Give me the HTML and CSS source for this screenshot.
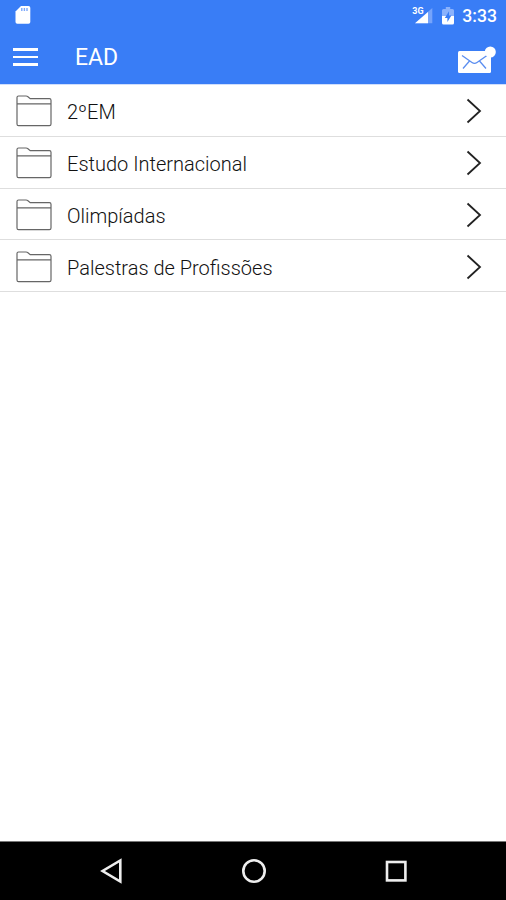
FILE: index.html
```
<!DOCTYPE html>
<html lang="pt-BR">
<head>
  <meta charset="UTF-8" />
  <meta name="viewport" content="width=device-width, initial-scale=1" />
  <title>EAD</title>
  <link rel="stylesheet" href="styles.css">
</head>
<body>
  <svg class="symbols" aria-hidden="true">
    <symbol id="folder" viewBox="0 0 36 32">
      <path d="M1 8.8H35M1 9V2.6Q1 1 2.6 1H10Q11.2 1 12 1.8L14.2 3.6H33.4Q35 3.6 35 5.2V29Q35 30.6 33.4 30.6H2.6Q1 30.6 1 29V9" />
    </symbol>
    <symbol id="chevron" viewBox="0 0 16 26">
      <path d="M1.5 1.5L14 13L1.5 24.5" />
    </symbol>
  </svg>

  <header>
    <div class="status-bar">
      <svg class="sd-card" width="16" height="20" viewBox="0 0 16 20">
        <path d="M6 1H13.5Q15.3 1 15.3 2.8V17Q15.3 18.8 13.5 18.8H2.3Q.5 18.8 .5 17V6.5Z" fill="#fff" />
        <path d="M6.8 3V6M9.4 3V6M12 3V6" stroke="#7ca8fb" stroke-width="1.4" />
      </svg>
      <div class="status-icons">
        <div class="network">
          <span>3G</span>
          <svg width="18" height="16" viewBox="0 0 18 16">
            <path d="M17.3 0V15.3H0Z" fill="#76a4fb" />
            <path d="M13 4V15.3H0Z" fill="#fff" />
          </svg>
        </div>
        <svg class="battery" width="12" height="18" viewBox="0 0 12 18">
          <path d="M3.8 0H8.2V2H10.5Q12 2 12 3.5V9H0V3.5Q0 2 1.5 2H3.8Z" fill="#8bb2fc" />
          <path d="M0 9H12V16Q12 17.5 10.5 17.5H1.5Q0 17.5 0 16Z" fill="#fff" />
          <path d="M7 4.3L2.8 11H5.4V15L9.4 8.5H7Z" fill="#397df6" />
        </svg>
        <span class="time">3:33</span>
      </div>
    </div>
    <div class="toolbar">
      <button class="menu" aria-label="Menu"><i></i><i></i><i></i></button>
      <h1>EAD</h1>
      <button class="mail" aria-label="Mensagens">
        <svg width="38" height="28" viewBox="0 0 38 28">
          <rect x="0" y="5" width="33" height="22" rx="1.5" fill="#fff" />
          <path d="M4 9.5L14 16.5Q16.5 18.4 19 16.5L29 9.5M5 22.5L11.5 15M28 22.5L21.5 15" fill="none" stroke="#5b8ef0" stroke-width="1.3" />
          <circle cx="32.3" cy="6" r="5.5" fill="#fff" />
        </svg>
      </button>
    </div>
  </header>

  <main>
    <ul class="folders">
      <li>
        <svg class="folder"><use href="#folder" /></svg>
        <span>2ºEM</span>
        <svg class="chevron"><use href="#chevron" /></svg>
      </li>
      <li>
        <svg class="folder"><use href="#folder" /></svg>
        <span>Estudo Internacional</span>
        <svg class="chevron"><use href="#chevron" /></svg>
      </li>
      <li>
        <svg class="folder"><use href="#folder" /></svg>
        <span>Olimpíadas</span>
        <svg class="chevron"><use href="#chevron" /></svg>
      </li>
      <li>
        <svg class="folder"><use href="#folder" /></svg>
        <span>Palestras de Profissões</span>
        <svg class="chevron"><use href="#chevron" /></svg>
      </li>
    </ul>
  </main>

  <nav class="nav-bar">
    <svg width="24" height="26" viewBox="0 0 24 26">
      <path d="M20.3 2.5V23.5L2.6 13Z" />
    </svg>
    <svg width="24" height="26" viewBox="0 0 24 26">
      <circle cx="12" cy="13" r="10.7" />
    </svg>
    <svg width="24" height="26" viewBox="0 0 24 26">
      <rect x="3" y="4" width="18.4" height="18.4" />
    </svg>
  </nav>
</body>
</html>
```

FILE: styles.css
```
* {
  margin: 0;
  padding: 0;
  box-sizing: border-box;
}

body {
  font-family: Roboto, sans-serif;
  background: #fff;
  height: 100vh;
  color: #111;
  display: flex;
  flex-direction: column;
  overflow: hidden;
}

svg {
  display: block;
  flex: none;
}

.symbols {
  position: absolute;
  width: 0;
  height: 0;
}

button {
  background: none;
  border: none;
  cursor: pointer;
}

/* Topo */
header {
  background: #397df6;
  color: #fff;
  height: 85px;
  border-bottom: 1px solid #cfdefc;
}

.status-bar {
  height: 32px;
  padding: 0 9px 0 15px;
  display: flex;
  align-items: center;
  justify-content: space-between;
}

.sd-card {
  margin-bottom: 2px;
}

.status-icons {
  display: flex;
  align-items: center;
}

.network {
  position: relative;
  margin-right: 9px;
}

.network span {
  position: absolute;
  left: -3px;
  top: -2px;
  font-size: 9px;
  line-height: 10px;
  font-weight: 700;
}

.battery {
  margin-right: 8px;
}

.time {
  font-size: 17.6px;
  font-weight: 500;
  line-height: 32px;
}

.toolbar {
  height: 52px;
  padding: 0 10px 0 13px;
  display: flex;
  align-items: center;
}

.menu {
  width: 25px;
  display: flex;
  flex-direction: column;
  gap: 5px;
  margin-bottom: 2px;
}

.menu i {
  height: 2.7px;
  background: #fff;
}

h1 {
  flex: 1;
  margin: 0 0 2px 37px;
  font-size: 23px;
  font-weight: 400;
}

.mail {
  margin-top: 4px;
}

/* Lista de pastas */
main {
  flex: 1;
}

.folders {
  list-style: none;
}

.folders li {
  height: 51.75px;
  padding: 0 24px 0 16px;
  display: flex;
  align-items: center;
  border-bottom: 1.5px solid #dedede;
}

.folders span {
  flex: 1;
  margin: 4px 0 0 15px;
  font-size: 20px;
  font-weight: 300;
}

.folder {
  width: 36px;
  height: 32px;
  margin-top: 2px;
  fill: none;
  stroke: #666;
  stroke-width: 1.2;
}

.chevron {
  width: 16px;
  height: 26px;
  margin-top: 2px;
  fill: none;
  stroke: #222;
  stroke-width: 1.8;
}

/* Barra de navegação */
.nav-bar {
  height: 59px;
  background: #000;
  border-top: 1px solid #777;
  padding: 0 98px 0 100px;
  display: flex;
  align-items: center;
  justify-content: space-between;
}

.nav-bar svg {
  fill: none;
  stroke: #eee;
  stroke-width: 2.6;
}
```
